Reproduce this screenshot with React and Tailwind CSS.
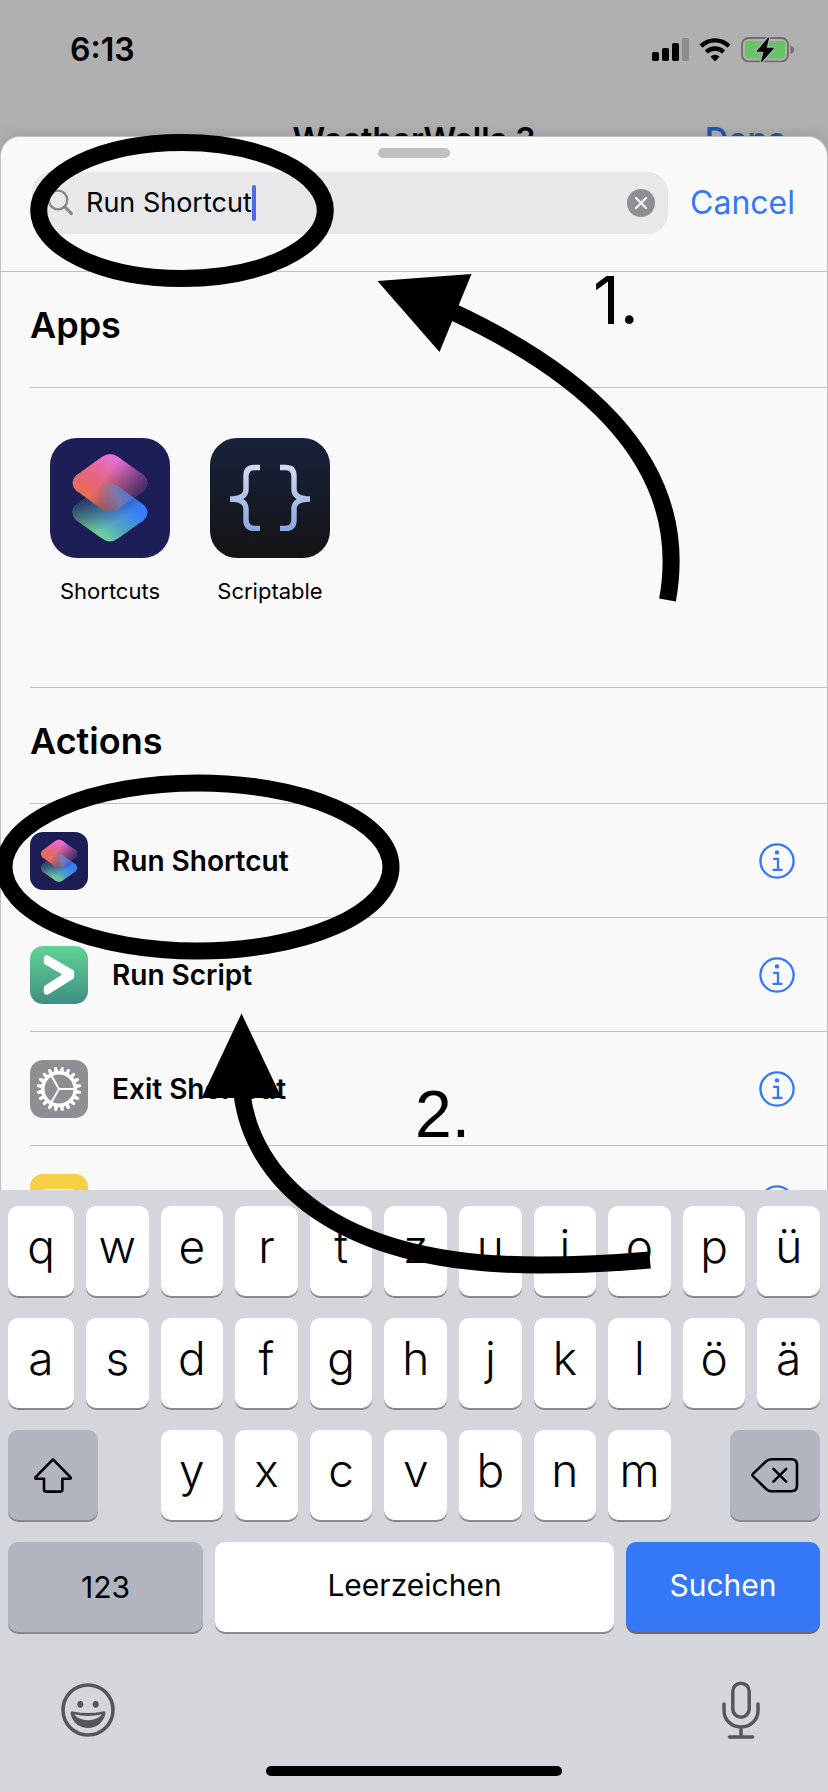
import React from "react";

const ROW_ONE = ["q", "w", "e", "r", "t", "z", "u", "i", "o", "p", "ü"];
const ROW_TWO = ["a", "s", "d", "f", "g", "h", "j", "k", "l", "ö", "ä"];
const ROW_THREE = ["y", "x", "c", "v", "b", "n", "m"];
const GEAR_TEETH = Array.from({ length: 20 }, (_, i) => 9 + i * 18);

function SignalIcon() {
  return (
    <svg width="37" height="24" viewBox="0 0 37 24" aria-hidden="true">
      <rect x="0" y="14" width="7" height="9" rx="1.8" />
      <rect x="10" y="10" width="7" height="13" rx="1.8" />
      <rect x="20" y="5" width="7" height="18" rx="1.8" />
      <rect x="30" y="0" width="7" height="23" rx="1.8" fill="#8c8c8d" />
    </svg>
  );
}

function WifiIcon() {
  return (
    <svg width="32" height="24" viewBox="0 0 32 24" aria-hidden="true">
      <path d="M2 8.2C10 0.4 22 0.4 30 8.2" fill="none" stroke="#000" strokeWidth="4.4" />
      <path d="M7.4 14C12.3 9.3 19.7 9.3 24.6 14" fill="none" stroke="#000" strokeWidth="4.4" />
      <path d="M11.4 18.6Q16 14.8 20.6 18.6L16 23.4Z" />
    </svg>
  );
}

function BatteryIcon() {
  return (
    <svg width="53" height="26" viewBox="0 0 53 26" aria-hidden="true">
      <rect x="1" y="1" width="46" height="23.4" rx="6.5" fill="none" stroke="#6e6e70" strokeWidth="1.8" />
      <rect x="4" y="4" width="40" height="17.4" rx="3" fill="#64c466" />
      <path d="M49.5 8.4Q53 9.6 53 12.7T49.5 17Z" fill="#6e6e70" />
      <path d="M27.6 0.5 16 14.2h7.2L20.4 25 32.6 11.2h-7.4z" fill="#000" stroke="#b0b0b1" strokeWidth="3.4" strokeLinejoin="round" paintOrder="stroke" />
      <path d="M27.6 0.8 16 14.2h7.2L20.4 24.8 32.6 11.2h-7.4z" fill="#000" stroke="#000" strokeWidth="0.8" strokeLinejoin="round" />
    </svg>
  );
}

const UPPER_TILE =
  "M52 18.8Q60 13.2 68 18.8L94 37.5Q101 45 94 52.5L68 71.2Q60 76.8 52 71.2L26 52.5Q19 45 26 37.5Z";
const LOWER_TILE =
  "M52 48.2Q60 42.6 68 48.2L94 66.9Q101 74.4 94 81.9L68 100.6Q60 106.2 52 100.6L26 81.9Q19 74.4 26 66.9Z";

function ShortcutsIcon({ id, className }) {
  return (
    <svg viewBox="0 0 120 120" className={className} aria-hidden="true">
      <defs>
        <linearGradient id={`${id}-pink`} gradientUnits="userSpaceOnUse" x1="64" y1="18" x2="40" y2="62">
          <stop offset="0" stopColor="#e76fd9" />
          <stop offset="0.55" stopColor="#e4667f" />
          <stop offset="1" stopColor="#ea6d54" />
        </linearGradient>
        <linearGradient id={`${id}-pinkfade`} gradientUnits="userSpaceOnUse" x1="62" y1="30" x2="94" y2="54">
          <stop offset="0" stopColor="#1e1e57" stopOpacity="0" />
          <stop offset="1" stopColor="#1e1e57" stopOpacity="0.85" />
        </linearGradient>
        <linearGradient id={`${id}-blue`} gradientUnits="userSpaceOnUse" x1="52" y1="102" x2="80" y2="68">
          <stop offset="0" stopColor="#74d696" />
          <stop offset="0.5" stopColor="#4fa0c4" />
          <stop offset="1" stopColor="#3a7ef6" />
        </linearGradient>
        <linearGradient id={`${id}-bluefade`} gradientUnits="userSpaceOnUse" x1="34" y1="62" x2="52" y2="92">
          <stop offset="0" stopColor="#1e1e57" stopOpacity="0.8" />
          <stop offset="1" stopColor="#1e1e57" stopOpacity="0" />
        </linearGradient>
        <linearGradient id={`${id}-blend`} gradientUnits="userSpaceOnUse" x1="48" y1="64" x2="82" y2="56">
          <stop offset="0" stopColor="#8a83a8" stopOpacity="0" />
          <stop offset="0.55" stopColor="#7a86b4" stopOpacity="0.8" />
          <stop offset="1" stopColor="#3a78ee" />
        </linearGradient>
        <clipPath id={`${id}-clip`}>
          <path d={UPPER_TILE} />
        </clipPath>
      </defs>
      <rect width="120" height="120" rx="27" fill="#1e1e57" />
      <path d={LOWER_TILE} fill={`url(#${id}-blue)`} />
      <path d={LOWER_TILE} fill={`url(#${id}-bluefade)`} />
      <path d={UPPER_TILE} fill={`url(#${id}-pink)`} />
      <path d={UPPER_TILE} fill={`url(#${id}-pinkfade)`} />
      <g clipPath={`url(#${id}-clip)`}>
        <path d={LOWER_TILE} fill={`url(#${id}-blend)`} />
      </g>
    </svg>
  );
}

function ScriptableIcon() {
  return (
    <svg viewBox="0 0 120 120" className="size-[120px]" aria-hidden="true">
      <defs>
        <linearGradient id="scriptable-bg" x1="0" y1="0" x2="0" y2="1">
          <stop offset="0" stopColor="#17223c" />
          <stop offset="1" stopColor="#141414" />
        </linearGradient>
        <linearGradient id="scriptable-brace" gradientUnits="userSpaceOnUse" x1="0" y1="27" x2="0" y2="93">
          <stop offset="0" stopColor="#d6dbf2" />
          <stop offset="1" stopColor="#88a7e0" />
        </linearGradient>
      </defs>
      <rect width="120" height="120" rx="27" fill="url(#scriptable-bg)" />
      <g fill="none" stroke="url(#scriptable-brace)" strokeWidth="5.4">
        <path d="M50 29.5H44.5Q36 29.5 36 38V51Q36 61 20 61Q36 61 36 71V82Q36 90.4 44.5 90.4H50" />
        <path d="M70 29.5H75.5Q84 29.5 84 38V51Q84 61 100 61Q84 61 84 71V82Q84 90.4 75.5 90.4H70" />
      </g>
    </svg>
  );
}

function ScriptIcon() {
  return (
    <svg viewBox="0 0 58 58" className="size-[58px]" aria-hidden="true">
      <defs>
        <linearGradient id="script-bg" x1="0" y1="0" x2="0" y2="1">
          <stop offset="0" stopColor="#60d394" />
          <stop offset="1" stopColor="#408e83" />
        </linearGradient>
      </defs>
      <rect width="58" height="58" rx="13" fill="url(#script-bg)" />
      <path
        d="M17 11.4 42 25.8V30.8L17 46.6 16 46V41.6L36.4 28.4 16 16.4V12Z"
        fill="#fff"
        stroke="#fff"
        strokeWidth="4.4"
        strokeLinejoin="round"
      />
    </svg>
  );
}

function GearIcon() {
  return (
    <svg viewBox="0 0 58 58" className="size-[58px]" aria-hidden="true">
      <rect width="58" height="58" rx="13" fill="#8e8e93" />
      <g transform="translate(29 29)">
        <circle r="16.2" fill="none" stroke="#fff" strokeWidth="3.4" />
        {GEAR_TEETH.map((angle) => (
          <path key={angle} d="M-2.2 -17 -1.2 -22.2H1.2L2.2 -17Z" fill="#fff" transform={`rotate(${angle})`} />
        ))}
        <path d="M0 0H15M0 0-7.6 -13.2M0 0-7.6 13.2" stroke="#fff" strokeWidth="2" />
      </g>
    </svg>
  );
}

function NoteIcon() {
  return (
    <svg viewBox="0 0 58 58" className="size-[58px]" aria-hidden="true">
      <rect width="58" height="58" rx="13" fill="#f8ce46" />
      <rect x="12" y="15" width="33" height="30" rx="4" fill="#fff" />
    </svg>
  );
}

function InfoIcon() {
  return (
    <svg width="36" height="36" viewBox="0 0 36 36" fill="none" stroke="#3478f6" aria-hidden="true">
      <circle cx="18" cy="18" r="16.6" strokeWidth="2.3" />
      <circle cx="18" cy="9.4" r="2.2" fill="#3478f6" stroke="none" />
      <path d="M15 15.8H19V26.5M14.4 26.8H22.6" strokeWidth="2.3" strokeLinecap="round" strokeLinejoin="round" />
    </svg>
  );
}

const ACTIONS = [
  { name: "Run Shortcut", icon: <ShortcutsIcon id="row" className="size-[58px]" /> },
  { name: "Run Script", icon: <ScriptIcon /> },
  { name: "Exit Shortcut", icon: <GearIcon /> },
  { name: "", icon: <NoteIcon /> },
];

function SectionHeading({ children }) {
  return (
    <h2 className="flex h-[116px] items-center border-b border-[#c0c0c1] pb-[10px] text-[36px] font-semibold">
      {children}
    </h2>
  );
}

function LetterKey({ letter }) {
  return (
    <button
      type="button"
      className="flex h-[90px] items-center justify-center rounded-[10px] bg-white pb-[10px] text-[46px] font-[350] shadow-[0_2px_0_#8a8b8f]"
    >
      {letter}
    </button>
  );
}

function Annotations() {
  return (
    <svg
      viewBox="0 0 828 1792"
      preserveAspectRatio="xMinYMin meet"
      className="pointer-events-none absolute inset-0 z-20 h-full w-full"
    >
      <g fill="none" stroke="#000" strokeWidth="17">
        <ellipse cx="182" cy="210.5" rx="143.3" ry="68" />
        <ellipse cx="197.5" cy="867" rx="193.5" ry="84" />
        <path d="M452 311.5C560 362 695 450 667.5 600" />
        <path d="M242 1094C252 1175 330 1265 538 1265Q595 1265 650 1260" />
      </g>
      <path d="M377.5 281 471.5 274 439.5 352Z" />
      <path d="M241.5 1013.5 281.7 1098H201.7Z" />
      <text x="593" y="324" className="font-['Inter',sans-serif] text-[66px]">
        1.
      </text>
      <text x="415" y="1137" className="font-['Liberation_Sans',sans-serif] text-[66px]">
        2.
      </text>
    </svg>
  );
}

export default function App() {
  return (
    <div className="relative flex h-screen flex-col overflow-hidden bg-[#b0b0b1] font-['Inter',sans-serif] text-black">
      <header className="shrink-0">
        <div className="flex h-[100px] items-center justify-between pr-[34px] pl-[70px]">
          <span className="text-[32px] font-semibold">6:13</span>
          <div className="flex items-center gap-[10px]">
            <SignalIcon />
            <WifiIcon />
            <BatteryIcon />
          </div>
        </div>
        <div className="mt-5 grid grid-cols-[1fr_auto_1fr] text-[32px] leading-10 font-semibold">
          <h1 className="col-start-2">WeatherWalls 3</h1>
          <button type="button" className="justify-self-end pr-[42px] text-[#2257b3]">
            Done
          </button>
        </div>
      </header>

      <main className="relative z-10 -mt-6 min-h-0 flex-1 overflow-hidden rounded-t-[20px] border border-b-0 border-[#c0c0c1] bg-[#f9f9f9] shadow-[0_0_16px_rgba(0,0,0,0.15)]">
        <div className="mx-auto mt-[11px] h-[10px] w-[72px] rounded-full bg-[#c0c0c2]" />
        <form
          className="mt-[14px] flex items-center gap-[22px] border-b border-[#c0c0c1] pr-8 pb-[37px] pl-[31px]"
          onSubmit={(event) => event.preventDefault()}
        >
          <div className="flex h-[62px] min-w-0 flex-1 items-center rounded-[20px] bg-[#e8e8ea] pr-[13px] pl-4">
            <svg width="26" height="28" viewBox="0 0 26 28" fill="none" stroke="#87878b" aria-hidden="true">
              <circle cx="10" cy="11" r="9.3" strokeWidth="2.3" />
              <path d="M17 18 23.4 24.6" strokeWidth="3" strokeLinecap="round" />
            </svg>
            <input
              type="text"
              aria-label="Search"
              defaultValue="Run Shortcut"
              className="ml-3 field-sizing-content bg-transparent p-0 text-[27px] outline-none"
            />
            <span className="h-9 w-1 rounded-sm bg-[#4b6be8]" />
            <button type="button" aria-label="Clear search" className="ml-auto">
              <svg width="28" height="28" viewBox="0 0 28 28" aria-hidden="true">
                <circle cx="14" cy="14" r="14" fill="#8e8e93" />
                <path d="M9 9 19 19M19 9 9 19" stroke="#f2f2f4" strokeWidth="2.4" strokeLinecap="round" />
              </svg>
            </button>
          </div>
          <button type="button" className="text-[32px] text-[#3478f6]">
            Cancel
          </button>
        </form>

        <section className="ml-[29px]">
          <SectionHeading>Apps</SectionHeading>
          <div className="flex gap-10 border-b border-[#c0c0c1] pt-[50px] pb-[81px] pl-5">
            <button type="button" className="flex w-[120px] flex-col items-center gap-[18px] text-[22px] leading-[30px]">
              <ShortcutsIcon id="app" className="size-[120px]" />
              Shortcuts
            </button>
            <button type="button" className="flex w-[120px] flex-col items-center gap-[18px] text-[22px] leading-[30px]">
              <ScriptableIcon />
              Scriptable
            </button>
          </div>
        </section>

        <section className="ml-[29px]">
          <SectionHeading>Actions</SectionHeading>
          <ul>
            {ACTIONS.map((action) => (
              <li key={action.name} className="flex h-[114px] items-center border-b border-[#c0c0c1] pr-[32px]">
                {action.icon}
                <span className="ml-6 flex-1 text-[28px] font-semibold">{action.name}</span>
                <button type="button" aria-label="Info">
                  <InfoIcon />
                </button>
              </li>
            ))}
          </ul>
        </section>
      </main>

      <div className="relative z-10 shrink-0 bg-[#d5d6db] px-2 pt-4 pb-4">
        <div className="flex flex-col gap-[22px]">
          <div className="grid grid-cols-[66px_repeat(10,minmax(0,1fr))] gap-3">
            {ROW_ONE.map((letter) => (
              <LetterKey key={letter} letter={letter} />
            ))}
          </div>
          <div className="grid grid-cols-[66px_repeat(10,minmax(0,1fr))] gap-3">
            {ROW_TWO.map((letter) => (
              <LetterKey key={letter} letter={letter} />
            ))}
          </div>
          <div className="grid grid-cols-[66px_repeat(10,minmax(0,1fr))] gap-3">
            <button
              type="button"
              aria-label="Shift"
              className="col-span-2 flex h-[90px] w-[90px] items-center justify-center rounded-[10px] bg-[#b0b5c0] shadow-[0_2px_0_#8a8b8f]"
            >
              <svg width="40" height="36" viewBox="0 0 40 36" fill="none" stroke="#000" strokeWidth="2.6" strokeLinejoin="round" aria-hidden="true">
                <path d="M20 2.4 37.6 20.4Q38.2 21.8 36.6 21.8H29.4V32.6Q29.4 34.6 27.4 34.6H13Q11 34.6 11 32.6V21.8H3.4Q1.8 21.8 2.4 20.4Z" />
              </svg>
            </button>
            {ROW_THREE.map((letter) => (
              <LetterKey key={letter} letter={letter} />
            ))}
            <button
              type="button"
              aria-label="Delete"
              className="col-span-2 flex h-[90px] w-[90px] items-center justify-center justify-self-end rounded-[10px] bg-[#b0b5c0] shadow-[0_2px_0_#8a8b8f]"
            >
              <svg width="48" height="36" viewBox="0 0 48 36" fill="none" stroke="#000" strokeWidth="2.6" strokeLinecap="round" strokeLinejoin="round" aria-hidden="true">
                <path d="M2.2 19.4Q0.8 18 2.2 16.6L15 4.4Q17.4 2.2 20.4 2.2H40.4Q46 2.2 46 7.8V28.6Q46 34.2 40.4 34.2H20.4Q17.4 34.2 15 31.8Z" />
                <path d="M22.4 11.8 35.2 24.6M35.2 11.8 22.4 24.6" />
              </svg>
            </button>
          </div>
          <div className="grid grid-cols-[195px_1fr_194px] gap-3 text-[30px]">
            <button type="button" className="h-[90px] rounded-[10px] bg-[#b0b5c0] shadow-[0_2px_0_#8a8b8f]">
              123
            </button>
            <button type="button" className="h-[90px] rounded-[10px] bg-white pb-1 shadow-[0_2px_0_#8a8b8f]">
              Leerzeichen
            </button>
            <button type="button" className="h-[90px] rounded-[10px] bg-[#3478f6] pb-1 text-white shadow-[0_2px_0_#6a6b70]">
              Suchen
            </button>
          </div>
        </div>

        <div className="mt-[50px] flex h-14 items-center justify-between pr-[60px] pl-[52px]">
          <button type="button" aria-label="Emoji">
            <svg width="56" height="56" viewBox="-28 -28 56 56" fill="#55575c" aria-hidden="true">
              <circle r="25" fill="none" stroke="#55575c" strokeWidth="3.6" />
              <ellipse cx="-7.7" cy="-5.7" rx="3" ry="3.4" />
              <ellipse cx="7.7" cy="-5.7" rx="3" ry="3.4" />
              <path d="M-17.5 3.4Q-17.6 0.8 -15 1.4 0 4.6 15 1.4 17.6 0.8 17.5 3.4C15.6 12.4 8.6 18 0 18S-15.6 12.4 -17.5 3.4Z" />
              <path d="M-14 4.3Q0 7.6 14 4.3 9.6 10 0 10.2 -9.6 10 -14 4.3Z" fill="#d5d6db" />
            </svg>
          </button>
          <button type="button" aria-label="Dictate">
            <svg width="38" height="58" viewBox="0 0 38 58" fill="none" stroke="#55575c" strokeWidth="3.5" strokeLinecap="round" aria-hidden="true">
              <rect x="10.8" y="2.2" width="16.4" height="34" rx="8.2" />
              <path d="M2 23V29.5C2 39 9.4 46 19 46S36 39 36 29.5V23M19 46V55.5M7.4 56H30.6" />
            </svg>
          </button>
        </div>
        <div className="mx-auto mt-7 h-[10px] w-[296px] rounded-full bg-black" />
      </div>

      <Annotations />
    </div>
  );
}
